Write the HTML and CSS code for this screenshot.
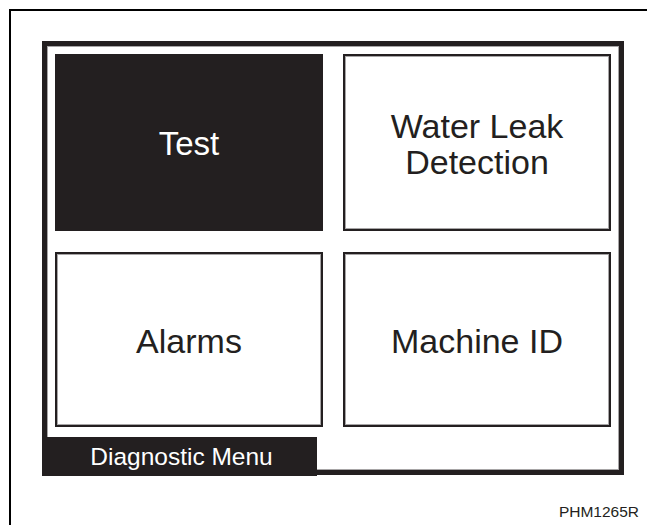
FILE: index.html
```html
<!DOCTYPE html>
<html lang="en">

<head>
    <meta charset="UTF-8">
    <title>Diagnostic Menu</title>
    <link rel="stylesheet" href="styles.css">
</head>

<body>
    <div class="sheet">
        <div class="screen">
            <div class="menu">
                <div class="tile selected">Test</div>
                <div class="tile">Water Leak<br>Detection</div>
                <div class="tile">Alarms</div>
                <div class="tile">Machine ID</div>
            </div>
            <div class="title-bar">Diagnostic Menu</div>
        </div>
        <p class="ref">PHM1265R</p>
    </div>
</body>

</html>
```

FILE: styles.css
```css
body {
    margin: 0;
    font-family: 'Liberation Sans', Arial, Helvetica, sans-serif;
    background-color: #fff;
    color: #231f20;
    overflow: hidden;
}

.sheet {
    margin: 9px 0 0 9px;
    height: 516px;
    box-sizing: border-box;
    border-top: 2px solid #000;
    border-left: 2px solid #000;
    padding-top: 30px;
}

.screen {
    position: relative;
    margin-left: 31px;
    width: 582px;
    height: 434px;
    box-sizing: border-box;
    border: 5px solid #231f20;
    box-shadow: inset 0 0 0 1px #a7a5a6;
    padding: 8px 8px 0 8px;
}

.menu {
    display: grid;
    grid-template-columns: 268px 268px;
    grid-template-rows: 177px 175px;
    column-gap: 20px;
    row-gap: 21px;
}

.tile {
    display: flex;
    align-items: center;
    justify-content: center;
    text-align: center;
    box-sizing: border-box;
    border: 2px solid #231f20;
    box-shadow: inset 0 0 0 1px #a7a5a6;
    font-size: 34px;
    line-height: 36px;
    padding-top: 2px;
}

.tile.selected {
    background-color: #231f20;
    box-shadow: none;
    color: #fff;
    font-size: 33px;
}

.title-bar {
    position: absolute;
    left: -5px;
    bottom: -6px;
    width: 275px;
    height: 39px;
    background-color: #231f20;
    color: #fff;
    font-size: 24.5px;
    line-height: 39px;
    text-align: center;
    padding-left: 4px;
    box-sizing: border-box;
}

.ref {
    margin: 28px 0 0 0;
    padding-right: 8px;
    text-align: right;
    font-size: 15.5px;
    line-height: 17px;
}
```
